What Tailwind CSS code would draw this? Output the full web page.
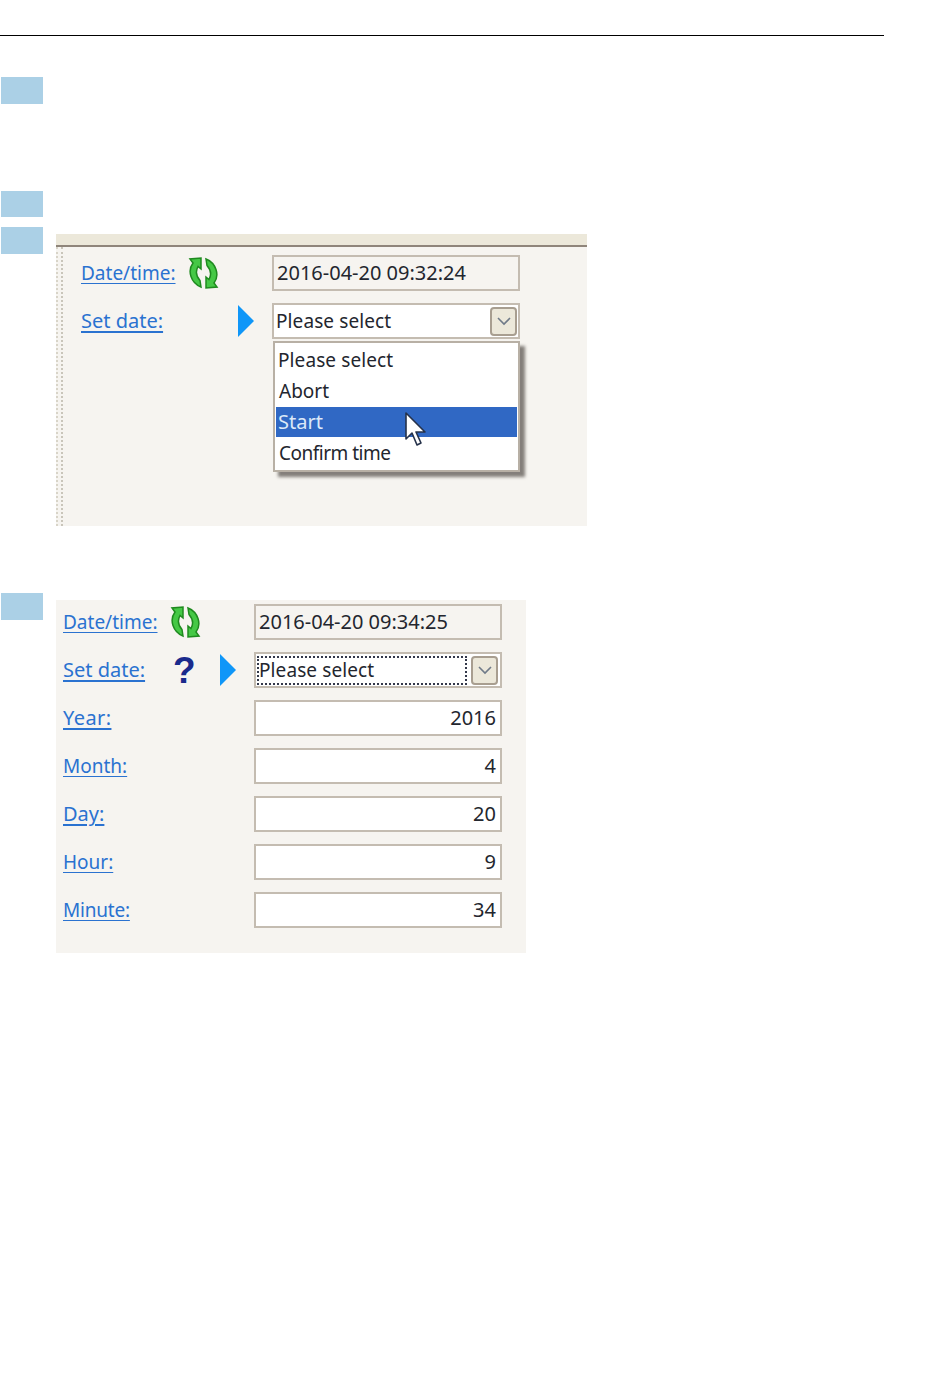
<!DOCTYPE html>
<html lang="en">
<head>
  <meta charset="UTF-8" />
  <title>Set date</title>
  <script src="https://cdn.jsdelivr.net/npm/@tailwindcss/browser@4"></script>
</head>
<body class="bg-white text-[#23262e] font-['Noto_Sans',sans-serif] text-[20px] leading-none">
  <div class="w-[950px] h-[1378px] pt-[35px] overflow-hidden">
    <div class="w-[884px] h-px bg-black"></div>

    <div class="ml-px mt-[41px] w-[42px] h-[27px] bg-[#abd0e6]"></div>
    <div class="ml-px mt-[87px] w-[42px] h-[26px] bg-[#abd0e6]"></div>

    <!-- step with dropdown open -->
    <div class="flex mt-[10px]">
      <div class="ml-px w-[42px] h-[27px] bg-[#abd0e6] shrink-0"></div>
      <div class="relative ml-[13px] mt-[7px] w-[531px] h-[292px] bg-[#f6f4f0]">
        <div class="h-[13px] bg-[#ece8da] border-b-2 border-[#8f857a]"></div>
        <div class="absolute left-0 top-[13px] bottom-0 w-[7px] border-l-[2px] border-r-[2px] border-dotted border-l-[#d8d4c8] border-r-[#c9c5ba]"></div>

        <div class="grid grid-cols-[107px_50px_34px_248px] grid-rows-[36px_36px] gap-y-[12px] pl-[25px] pt-[8px] items-center">
          <a class="text-[19px] text-[#2a72d0] underline underline-offset-[3px]">Date/time:</a>
          <svg class="w-[31px] h-[32px]" viewBox="0 0 31 32">
            <g fill="#45c845" stroke="#1f8a1f" stroke-width="1.5">
              <path d="M13 1 L13 12 L10 9.5 C7.5 14 8 19 12 23.5 L13 30 C3 26 -1 14 5 6 L2 2 Z" />
              <path d="M13 1 L13 12 L10 9.5 C7.5 14 8 19 12 23.5 L13 30 C3 26 -1 14 5 6 L2 2 Z" transform="rotate(180 15.5 16)" />
            </g>
          </svg>
          <span></span>
          <div class="h-[36px] border-2 border-[#c4bcb1] flex items-center pl-[3px]">2016-04-20 09:32:24</div>

          <a class="text-[#2a72d0] underline underline-offset-[3px]">Set date:</a>
          <span></span>
          <svg class="w-[16px] h-[32px]" viewBox="0 0 16 32"><path d="M0 0 L16 16 L0 32 Z" fill="#0f96f8" /></svg>
          <div class="h-[36px] border-2 border-[#c4bcb1] bg-white flex items-center justify-between pl-[2px] pr-px">
            <span class="text-[19px] tracking-[0.1px]">Please select</span>
            <span class="w-[27px] h-[29px] rounded-[4px] border-2 border-[#a89e90] bg-[#ece8da] flex items-center justify-center">
              <svg class="w-[14px] h-[9px]" viewBox="0 0 14 9"><path d="M1 1 L7 7 L13 1" fill="none" stroke="#6f7a88" stroke-width="1.6" /></svg>
            </span>
          </div>
        </div>

        <!-- dropdown list -->
        <div class="absolute left-[217px] top-[107px] w-[247px] h-[131px] bg-white border-2 border-[#b8b0a5] shadow-[5px_5px_3px_rgba(70,65,60,0.65)] px-px py-px">
          <div class="h-[31px] flex items-center pl-[2px] pt-[2px] text-[19px] tracking-[0.1px]">Please select</div>
          <div class="h-[32px] flex items-center pl-[3px] text-[19px]">Abort</div>
          <div class="h-[30px] flex items-center pl-[2px] bg-[#3068c4] text-[#dce8f8]">Start</div>
          <div class="h-[33px] flex items-center pl-[3px] text-[19px] tracking-[-0.5px]">Confirm time</div>
        </div>

        <!-- mouse pointer -->
        <svg class="absolute left-[349px] top-[178px] w-[23px] h-[36px]" viewBox="0 0 23 36">
          <path d="M1 1 L1 27 L7 21 L12 33 L16 31 L11 20 L20 20 Z" fill="#fff" stroke="#26324a" stroke-width="1.6" stroke-linejoin="round" />
        </svg>
      </div>
    </div>

    <!-- step with entry fields -->
    <div class="flex mt-[67px]">
      <div class="ml-px w-[42px] h-[27px] bg-[#abd0e6] shrink-0"></div>
      <div class="ml-[13px] mt-[7px] w-[470px] h-[353px] bg-[#f6f4f0] pl-[7px] pt-[4px]">
        <div class="grid grid-cols-[107px_50px_34px_248px] auto-rows-[36px] gap-y-[12px] items-center">
          <a class="text-[19px] text-[#2a72d0] underline underline-offset-[3px]">Date/time:</a>
          <svg class="w-[31px] h-[32px]" viewBox="0 0 31 32">
            <g fill="#45c845" stroke="#1f8a1f" stroke-width="1.5">
              <path d="M13 1 L13 12 L10 9.5 C7.5 14 8 19 12 23.5 L13 30 C3 26 -1 14 5 6 L2 2 Z" />
              <path d="M13 1 L13 12 L10 9.5 C7.5 14 8 19 12 23.5 L13 30 C3 26 -1 14 5 6 L2 2 Z" transform="rotate(180 15.5 16)" />
            </g>
          </svg>
          <span></span>
          <div class="h-[36px] border-2 border-[#c4bcb1] flex items-center pl-[3px]">2016-04-20 09:34:25</div>

          <a class="text-[#2a72d0] underline underline-offset-[3px]">Set date:</a>
          <span class="pl-[3px] text-[37px] font-bold text-[#1a2a8c] font-['Liberation_Sans',sans-serif]">?</span>
          <svg class="w-[16px] h-[32px]" viewBox="0 0 16 32"><path d="M0 0 L16 16 L0 32 Z" fill="#0f96f8" /></svg>
          <div class="h-[36px] border-2 border-[#c4bcb1] bg-white flex items-center justify-between pl-px pr-[2px]">
            <span class="w-[210px] h-[29px] border-2 border-dotted border-[#33384a] flex items-center text-[19px] tracking-[0.1px]">Please select</span>
            <span class="w-[27px] h-[29px] rounded-[4px] border-2 border-[#a89e90] bg-[#ece8da] flex items-center justify-center">
              <svg class="w-[14px] h-[9px]" viewBox="0 0 14 9"><path d="M1 1 L7 7 L13 1" fill="none" stroke="#6f7a88" stroke-width="1.6" /></svg>
            </span>
          </div>

          <a class="col-span-3 tracking-[0.4px] text-[#2a72d0] underline underline-offset-[3px]">Year:</a>
          <div class="h-[36px] border-2 border-[#c4bcb1] bg-white flex items-center justify-end pr-[4px]">2016</div>
          <a class="col-span-3 text-[19px] text-[#2a72d0] underline underline-offset-[3px]">Month:</a>
          <div class="h-[36px] border-2 border-[#c4bcb1] bg-white flex items-center justify-end pr-[4px]">4</div>
          <a class="col-span-3 text-[#2a72d0] underline underline-offset-[3px]">Day:</a>
          <div class="h-[36px] border-2 border-[#c4bcb1] bg-white flex items-center justify-end pr-[4px]">20</div>
          <a class="col-span-3 text-[19px] text-[#2a72d0] underline underline-offset-[3px]">Hour:</a>
          <div class="h-[36px] border-2 border-[#c4bcb1] bg-white flex items-center justify-end pr-[4px]">9</div>
          <a class="col-span-3 text-[19px] tracking-[-0.2px] text-[#2a72d0] underline underline-offset-[3px]">Minute:</a>
          <div class="h-[36px] border-2 border-[#c4bcb1] bg-white flex items-center justify-end pr-[4px]">34</div>
        </div>
      </div>
    </div>
  </div>
</body>
</html>
